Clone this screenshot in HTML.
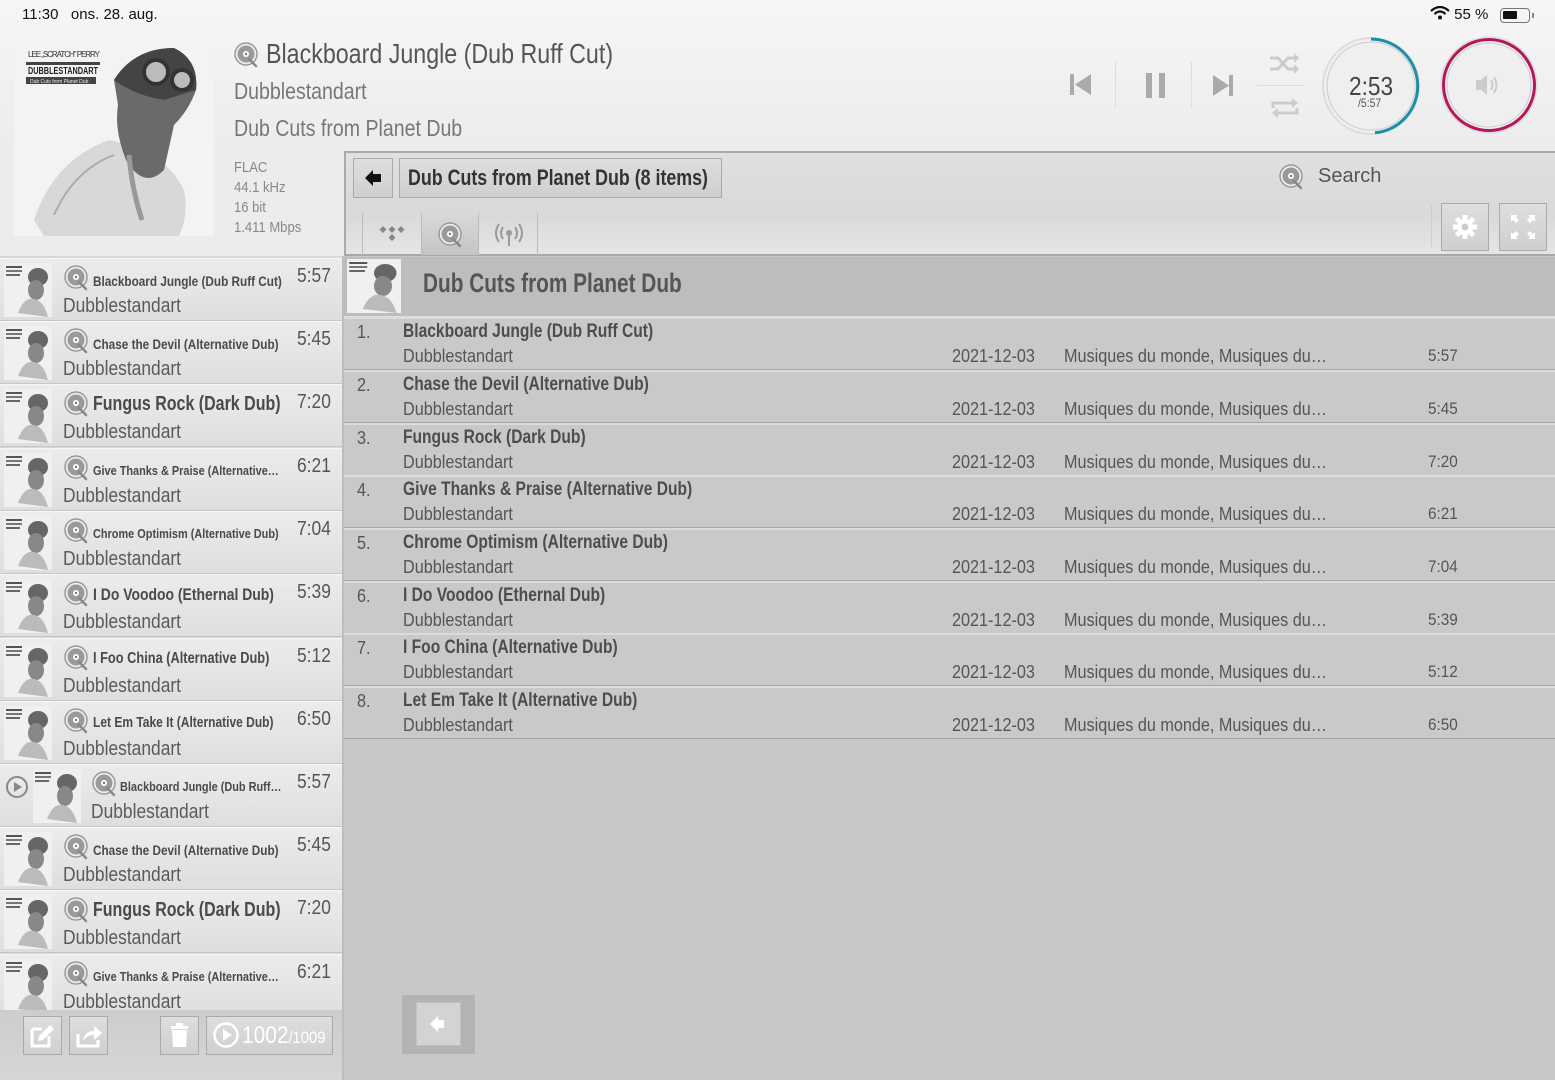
<!DOCTYPE html>
<html><head><meta charset="utf-8">
<style>
*{margin:0;padding:0;box-sizing:border-box}
body{width:1555px;height:1080px;overflow:hidden;background:#c8c8c8;font-family:"Liberation Sans Narrow","Liberation Sans",sans-serif;color:#555;position:relative}
.a{position:absolute;white-space:nowrap}
.n8{transform:scaleX(.87);transform-origin:0 0}
.b8{transform:scaleX(.81);transform-origin:0 0}
.top{left:0;top:0;width:1555px;height:152px;background:linear-gradient(#f6f6f6,#ececec)}
.lefthead{left:0;top:152px;width:344px;height:104px;background:#ececec}
.q{position:absolute;left:0;width:343px;height:63px;background:linear-gradient(#ececec,#dedede);border-top:1px solid #f8f8f8;border-bottom:1px solid #c6c6c6}
.q .th{position:absolute;left:4px;top:4px;width:48px;height:54px}
.q .ic{position:absolute;left:64px;top:6px;width:26px;height:26px}
.q .t{position:absolute;left:93px;top:11px;font-weight:bold;font-size:14px;color:#4a4a4a;white-space:nowrap;transform:scaleX(.84);transform-origin:0 0}
.q .d{position:absolute;left:297px;top:6px;font-size:20px;color:#555;transform:scaleX(.87);transform-origin:0 0}
.q .ar{position:absolute;left:63px;top:36px;font-size:20px;color:#5a5a5a;white-space:nowrap;transform:scaleX(.87);transform-origin:0 0}
.r{position:absolute;left:344px;width:1211px;height:53px;background:#c9c9c9;border-top:2px solid #dcdcdc;border-bottom:1px solid #a4a4a4}
.r div{white-space:nowrap;transform:scaleX(.9);transform-origin:0 0}
.r .n{position:absolute;left:13px;top:3px;font-size:18px;color:#555}
.r .t{position:absolute;left:59px;top:2px;font-size:19px;font-weight:bold;color:#4d4d4d;transform:scaleX(.82)}
.r .ar{position:absolute;left:59px;top:27px;font-size:18px;color:#555}
.r .dt{position:absolute;left:608px;top:27px;font-size:18px;color:#555}
.r .g{position:absolute;left:720px;top:27px;font-size:18px;color:#555}
.r .du{position:absolute;left:1084px;top:27px;font-size:17px;color:#555}
.btn{position:absolute;background:linear-gradient(#dedede,#cfcfcf);border:1px solid #aaa}
</style></head><body>
<svg width="0" height="0" style="position:absolute">
<defs>
<symbol id="disc" viewBox="0 0 26 26">
<circle cx="12" cy="12" r="11" fill="#eee" stroke="#999" stroke-width="1.5"/>
<circle cx="12" cy="12" r="8.5" fill="#9a9a9a"/>
<circle cx="12" cy="12" r="3" fill="#fff"/>
<circle cx="12" cy="12" r="1.2" fill="#777"/>
<path d="M15 17 L22 24" stroke="#888" stroke-width="2.5" stroke-linecap="round"/>
</symbol>
<symbol id="thumb" viewBox="0 0 48 54">
<rect width="48" height="54" fill="#f0f0f0"/>
<rect x="2" y="3" width="16" height="2" fill="#555"/><rect x="2" y="7" width="16" height="2" fill="#777"/><rect x="2" y="11" width="14" height="2" fill="#666"/>
<ellipse cx="34" cy="14" rx="10" ry="9" fill="#666"/>
<ellipse cx="32" cy="27" rx="8" ry="10" fill="#888"/>
<path d="M14 50 Q20 34 30 36 Q40 38 44 54 Z" fill="#bbb"/>
</symbol>
</defs></svg>

<div class="a top"></div>
<div class="a lefthead"></div>
<div class="a" style="left:22px;top:6px;font-family:'Liberation Sans',sans-serif;font-size:15px;color:#111">11:30&nbsp;&nbsp; ons. 28. aug.</div>
<div class="a" style="left:1430px;top:6px;font-family:'Liberation Sans',sans-serif;font-size:15px;color:#111">
<svg width="20" height="14" viewBox="0 0 20 14" style="vertical-align:-1px"><path d="M1 5 Q10 -3 19 5" stroke="#111" stroke-width="2.2" fill="none"/><path d="M4.5 8 Q10 3 15.5 8" stroke="#111" stroke-width="2.2" fill="none"/><circle cx="10" cy="11.5" r="2" fill="#111"/></svg> 55 %</div>
<div class="a" style="left:1500px;top:8px;width:30px;height:15px;border:1.5px solid #777;border-radius:4px"><div style="position:absolute;left:2px;top:2px;width:14px;height:8px;background:#111;border-radius:1px"></div></div>
<div class="a" style="left:1532px;top:13px;width:2px;height:5px;background:#888"></div>

<div class="a" style="left:14px;top:40px;width:200px;height:196px">
<svg width="200" height="196" viewBox="0 0 200 196">
<rect width="200" height="196" fill="#f3f3f3"/>
<text x="14" y="17" font-size="8" fill="#333" font-family="Liberation Sans,sans-serif" textLength="72">LEE „SCRATCH" PERRY</text>
<rect x="12" y="22" width="74" height="3" fill="#444"/>
<text x="14" y="34" font-size="10" font-weight="bold" fill="#222" font-family="Liberation Sans,sans-serif" textLength="70" lengthAdjust="spacingAndGlyphs">DUBBLESTANDART</text>
<rect x="12" y="37" width="70" height="7" fill="#444"/>
<text x="16" y="43" font-size="5" fill="#eee">Dub Cuts from Planet Dub</text>
<path d="M20 180 Q40 120 95 100 Q150 110 170 150 Q175 175 165 196 L30 196 Z" fill="#d8d8d8"/>
<path d="M40 175 Q60 130 100 115" stroke="#aaa" stroke-width="2" fill="none"/>
<path d="M100 40 Q120 8 160 8 Q185 20 182 50 Q175 70 160 85 L150 130 Q130 150 112 120 Q100 90 104 65 Z" fill="#6a6a6a"/>
<path d="M100 40 Q120 8 160 8 Q185 20 182 50 L150 60 Q120 55 100 40Z" fill="#444"/>
<circle cx="142" cy="32" r="12" fill="#bbb" stroke="#333" stroke-width="4"/><circle cx="168" cy="40" r="10" fill="#bbb" stroke="#333" stroke-width="4"/>
<path d="M115 115 Q118 150 128 180" stroke="#999" stroke-width="5" fill="none"/>
</svg></div>

<div class="a" style="left:234px;top:42px;width:26px;height:26px"><svg width="26" height="26"><use href="#disc"/></svg></div>
<div class="a n8" style="left:266px;top:38px;font-size:28px;color:#555;transform:scaleX(.83)">Blackboard Jungle (Dub Ruff Cut)</div>
<div class="a n8" style="left:234px;top:78px;font-size:23px;color:#777;transform:scaleX(.85)">Dubblestandart</div>
<div class="a n8" style="left:234px;top:115px;font-size:23px;color:#777;transform:scaleX(.85)">Dub Cuts from Planet Dub</div>
<div class="a n8" style="left:234px;top:158px;font-size:15px;color:#888;line-height:20px;white-space:normal">FLAC<br>44.1 kHz<br>16 bit<br>1.411 Mbps</div>

<svg class="a" style="left:1068px;top:72px" width="24" height="26"><rect x="2" y="2" width="4" height="21" fill="#aaa"/><path d="M23 2 L7 12.5 L23 23 Z" fill="#aaa"/></svg>
<div class="a" style="left:1115px;top:62px;width:1px;height:47px;background:#fff;border-left:1px solid #ddd"></div>
<svg class="a" style="left:1145px;top:73px" width="22" height="25"><rect x="1" y="0" width="6" height="25" fill="#aaa"/><rect x="14" y="0" width="6" height="25" fill="#aaa"/></svg>
<div class="a" style="left:1191px;top:62px;width:1px;height:47px;background:#fff;border-left:1px solid #ddd"></div>
<svg class="a" style="left:1213px;top:74px" width="22" height="24"><path d="M0 1 L16 11.5 L0 22 Z" fill="#aaa"/><rect x="16" y="1" width="4" height="21" fill="#aaa"/></svg>
<svg class="a" style="left:1268px;top:50px" width="34" height="26"><path d="M2 8 H10 L20 19 H28 M2 19 H10 L20 8 H28" stroke="#ccc" stroke-width="3" fill="none"/><path d="M26 3 L31 8 L26 13 Z M26 14 L31 19 L26 24 Z" fill="#ccc"/></svg>
<div class="a" style="left:1257px;top:85px;width:48px;height:1px;background:#ddd"></div>
<svg class="a" style="left:1268px;top:94px" width="34" height="28"><path d="M5 14 V9 H26 M29 14 V19 H8" stroke="#ccc" stroke-width="3" fill="none"/><path d="M24 4 L30 9 L24 14 Z M10 14 L4 19 L10 24 Z" fill="#ccc"/></svg>
<svg class="a" style="left:1320px;top:35px" width="102" height="102"><circle cx="51" cy="51" r="48" fill="#efefef" stroke="#ddd" stroke-width="2"/><circle cx="51" cy="51" r="44" fill="none" stroke="#ccc" stroke-width="1"/><path d="M51 4 A47 47 0 0 1 55 97.8" stroke="#1a8fa8" stroke-width="3" fill="none"/></svg>
<div class="a n8" style="left:1349px;top:71px;font-size:26px;color:#444">2:53</div>
<div class="a n8" style="left:1358px;top:96px;font-size:12px;color:#555">/5:57</div>
<svg class="a" style="left:1439px;top:35px" width="100" height="100"><circle cx="50" cy="50" r="48" fill="#efefef" stroke="#ddd" stroke-width="1.5"/><circle cx="50" cy="50" r="45.5" fill="none" stroke="#b5185a" stroke-width="3"/><circle cx="50" cy="50" r="42" fill="none" stroke="#ccc" stroke-width="1"/><path d="M37 45 H42 L48 40 V60 L42 55 H37 Z" fill="#ccc"/><path d="M52 45 Q55 50 52 55 M55 42 Q60 50 55 58" stroke="#ccc" stroke-width="2" fill="none"/></svg>

<div class="a" style="left:344px;top:151px;width:1211px;height:105px;background:linear-gradient(#e0e0e0,#d9d9d9 60%,#e5e5e5);border-top:2px solid #aaa;border-left:2px solid #aaa;border-bottom:2px solid #a8a8a8"></div>
<div class="btn" style="left:353px;top:158px;width:40px;height:40px"><svg width="38" height="38"><path d="M11 19 L19 11 V15 H27 V23 H19 V27 Z" fill="#111"/></svg></div>
<div class="btn" style="left:399px;top:158px;width:323px;height:40px"></div>
<div class="a b8" style="left:408px;top:165px;font-size:22px;font-weight:bold;color:#333">Dub Cuts from Planet Dub (8 items)</div>
<svg class="a" style="left:1279px;top:164px" width="26" height="26"><use href="#disc"/></svg>
<div class="a" style="left:1318px;top:165px;font-family:'Liberation Sans',sans-serif;font-size:20px;color:#555">Search</div>
<div class="a" style="left:362px;top:213px;width:1px;height:42px;background:#bbb"></div>
<div class="a" style="left:421px;top:213px;width:58px;height:42px;background:linear-gradient(#d9d9d9,#c4c4c4);border-left:1px solid #bbb;border-right:1px solid #bbb"></div>
<div class="a" style="left:537px;top:213px;width:1px;height:42px;background:#bbb"></div>
<svg class="a" style="left:379px;top:225px" width="28" height="18"><path d="M4 1 L7.5 4.5 L4 8 L0.5 4.5Z M13 1 L16.5 4.5 L13 8 L9.5 4.5Z M22 1 L25.5 4.5 L22 8 L18.5 4.5Z M13 9 L16.5 12.5 L13 16 L9.5 12.5Z" fill="#888"/></svg>
<svg class="a" style="left:438px;top:222px" width="26" height="26"><use href="#disc"/></svg>
<svg class="a" style="left:494px;top:221px" width="30" height="28"><circle cx="15" cy="12" r="3" fill="#999"/><rect x="14" y="13" width="2" height="12" fill="#999"/><path d="M9 6 Q5 12 9 18 M21 6 Q25 12 21 18 M5 3 Q-1 12 5 21 M25 3 Q31 12 25 21" stroke="#999" stroke-width="2" fill="none"/></svg>
<div class="a" style="left:1431px;top:205px;width:1px;height:42px;background:#fff;border-left:1px solid #ccc"></div>
<div class="btn" style="left:1441px;top:203px;width:48px;height:48px"><svg width="46" height="46"><g transform="translate(23 23)" fill="#fff"><circle r="8"/><rect x="-2.5" y="-12" width="5" height="24"/><rect x="-12" y="-2.5" width="24" height="5"/><g transform="rotate(45)"><rect x="-2.5" y="-12" width="5" height="24"/><rect x="-12" y="-2.5" width="24" height="5"/></g><circle r="3.5" fill="#ccc"/></g></svg></div>
<div class="btn" style="left:1499px;top:203px;width:48px;height:48px"><svg width="46" height="46" fill="#fff"><path d="M11 11 H18 L16 13 L19 16 L16 19 L13 16 L11 18Z M35 11 V18 L33 16 L30 19 L27 16 L30 13 L28 11Z M11 35 V28 L13 30 L16 27 L19 30 L16 33 L18 35Z M35 35 H28 L30 33 L27 30 L30 27 L33 30 L35 28Z"/></svg></div>

<div class="a" style="left:344px;top:257px;width:1211px;height:61px;background:#bdbdbd;border-bottom:2px solid #dedede"></div>
<svg class="a" style="left:347px;top:259px" width="54" height="54" viewBox="0 0 48 54" preserveAspectRatio="none"><use href="#thumb"/></svg>
<div class="a" style="left:423px;top:268px;font-size:27px;font-weight:bold;color:#555;transform:scaleX(.77);transform-origin:0 0">Dub Cuts from Planet Dub</div>

<div class="r" style="top:317px"><div class="n">1.</div><div class="t">Blackboard Jungle (Dub Ruff Cut)</div><div class="ar">Dubblestandart</div><div class="dt">2021-12-03</div><div class="g">Musiques du monde, Musiques du…</div><div class="du">5:57</div></div>
<div class="r" style="top:370px"><div class="n">2.</div><div class="t">Chase the Devil (Alternative Dub)</div><div class="ar">Dubblestandart</div><div class="dt">2021-12-03</div><div class="g">Musiques du monde, Musiques du…</div><div class="du">5:45</div></div>
<div class="r" style="top:423px"><div class="n">3.</div><div class="t">Fungus Rock (Dark Dub)</div><div class="ar">Dubblestandart</div><div class="dt">2021-12-03</div><div class="g">Musiques du monde, Musiques du…</div><div class="du">7:20</div></div>
<div class="r" style="top:475px"><div class="n">4.</div><div class="t">Give Thanks &amp; Praise (Alternative Dub)</div><div class="ar">Dubblestandart</div><div class="dt">2021-12-03</div><div class="g">Musiques du monde, Musiques du…</div><div class="du">6:21</div></div>
<div class="r" style="top:528px"><div class="n">5.</div><div class="t">Chrome Optimism (Alternative Dub)</div><div class="ar">Dubblestandart</div><div class="dt">2021-12-03</div><div class="g">Musiques du monde, Musiques du…</div><div class="du">7:04</div></div>
<div class="r" style="top:581px"><div class="n">6.</div><div class="t">I Do Voodoo (Ethernal Dub)</div><div class="ar">Dubblestandart</div><div class="dt">2021-12-03</div><div class="g">Musiques du monde, Musiques du…</div><div class="du">5:39</div></div>
<div class="r" style="top:633px"><div class="n">7.</div><div class="t">I Foo China (Alternative Dub)</div><div class="ar">Dubblestandart</div><div class="dt">2021-12-03</div><div class="g">Musiques du monde, Musiques du…</div><div class="du">5:12</div></div>
<div class="r" style="top:686px"><div class="n">8.</div><div class="t">Let Em Take It (Alternative Dub)</div><div class="ar">Dubblestandart</div><div class="dt">2021-12-03</div><div class="g">Musiques du monde, Musiques du…</div><div class="du">6:50</div></div>

<div class="a" style="left:402px;top:995px;width:73px;height:59px;background:#b3b3b3"></div>
<div class="a" style="left:416px;top:1002px;width:45px;height:44px;background:#d3d3d3;border:1px solid #c0c0c0"><svg width="44" height="44"><path d="M13 21 L21 13 V17 H27 V25 H21 V29 Z" fill="#fff"/></svg></div>

<div class="a" style="left:0;top:256px;width:344px;height:824px;background:#d8d8d8;border-right:2px solid #bdbdbd"></div>
<div class="a" style="left:0;top:256px;width:342px;height:754px;overflow:hidden">
<div class="q" style="top:2px"><svg class="th"><use href="#thumb"/></svg><svg class="ic"><use href="#disc"/></svg><div class="t" style="top:14px">Blackboard Jungle (Dub Ruff Cut)</div><div class="d">5:57</div><div class="ar">Dubblestandart</div></div>
<div class="q" style="top:65px"><svg class="th"><use href="#thumb"/></svg><svg class="ic"><use href="#disc"/></svg><div class="t" style="top:14px">Chase the Devil (Alternative Dub)</div><div class="d">5:45</div><div class="ar">Dubblestandart</div></div>
<div class="q" style="top:128px"><svg class="th"><use href="#thumb"/></svg><svg class="ic"><use href="#disc"/></svg><div class="t" style="top:8px;font-size:20px;transform:scaleX(.8)">Fungus Rock (Dark Dub)</div><div class="d">7:20</div><div class="ar">Dubblestandart</div></div>
<div class="q" style="top:192px"><svg class="th"><use href="#thumb"/></svg><svg class="ic"><use href="#disc"/></svg><div class="t" style="top:14px;font-size:13px">Give Thanks &amp; Praise (Alternative…</div><div class="d">6:21</div><div class="ar">Dubblestandart</div></div>
<div class="q" style="top:255px"><svg class="th"><use href="#thumb"/></svg><svg class="ic"><use href="#disc"/></svg><div class="t" style="top:14px;font-size:13px">Chrome Optimism (Alternative Dub)</div><div class="d">7:04</div><div class="ar">Dubblestandart</div></div>
<div class="q" style="top:318px"><svg class="th"><use href="#thumb"/></svg><svg class="ic"><use href="#disc"/></svg><div class="t" style="top:10px;font-size:17px;transform:scaleX(.82)">I Do Voodoo (Ethernal Dub)</div><div class="d">5:39</div><div class="ar">Dubblestandart</div></div>
<div class="q" style="top:382px"><svg class="th"><use href="#thumb"/></svg><svg class="ic"><use href="#disc"/></svg><div class="t" style="top:11px;font-size:16px;transform:scaleX(.8)">I Foo China (Alternative Dub)</div><div class="d">5:12</div><div class="ar">Dubblestandart</div></div>
<div class="q" style="top:445px"><svg class="th"><use href="#thumb"/></svg><svg class="ic"><use href="#disc"/></svg><div class="t" style="top:12px;font-size:15px;transform:scaleX(.8)">Let Em Take It (Alternative Dub)</div><div class="d">6:50</div><div class="ar">Dubblestandart</div></div>
<div class="q" style="top:508px"><svg class="a" style="left:5px;top:10px" width="24" height="24"><circle cx="12" cy="12" r="10" fill="none" stroke="#888" stroke-width="2"/><path d="M9 7 L17 12 L9 17Z" fill="#888"/></svg><svg class="th" style="left:33px"><use href="#thumb"/></svg><svg class="ic" style="left:92px"><use href="#disc"/></svg><div class="t" style="left:120px;top:14px;font-size:13px">Blackboard Jungle (Dub Ruff…</div><div class="d">5:57</div><div class="ar" style="left:91px">Dubblestandart</div></div>
<div class="q" style="top:571px"><svg class="th"><use href="#thumb"/></svg><svg class="ic"><use href="#disc"/></svg><div class="t" style="top:14px">Chase the Devil (Alternative Dub)</div><div class="d">5:45</div><div class="ar">Dubblestandart</div></div>
<div class="q" style="top:634px"><svg class="th"><use href="#thumb"/></svg><svg class="ic"><use href="#disc"/></svg><div class="t" style="top:8px;font-size:20px;transform:scaleX(.8)">Fungus Rock (Dark Dub)</div><div class="d">7:20</div><div class="ar">Dubblestandart</div></div>
<div class="q" style="top:698px"><svg class="th"><use href="#thumb"/></svg><svg class="ic"><use href="#disc"/></svg><div class="t" style="top:14px;font-size:13px">Give Thanks &amp; Praise (Alternative…</div><div class="d">6:21</div><div class="ar">Dubblestandart</div></div>
</div>
<div class="a" style="left:0;top:1010px;width:342px;height:70px;background:linear-gradient(#cdcdcd,#d6d6d6)"></div>
<div class="btn" style="left:23px;top:1016px;width:39px;height:39px"><svg width="37" height="37"><path d="M8 12 H18 M8 12 V29 H25 V19" stroke="#fff" stroke-width="3" fill="none"/><path d="M14 24 L15 19 L26 8 L30 12 L19 23 Z" fill="#fff"/></svg></div>
<div class="btn" style="left:69px;top:1016px;width:39px;height:39px"><svg width="37" height="37"><path d="M8 17 V29 H28 V23" stroke="#fff" stroke-width="3" fill="none"/><path d="M13 24 Q14 14 24 14 V9 L32 16 L24 23 V18 Q17 18 13 24Z" fill="#fff"/></svg></div>
<div class="btn" style="left:160px;top:1016px;width:39px;height:39px"><svg width="37" height="37"><rect x="10" y="9" width="17" height="3" fill="#fff"/><rect x="15" y="6" width="7" height="3" fill="#fff"/><path d="M11 13 H26 L25 30 H12 Z" fill="#fff"/></svg></div>
<div class="btn" style="left:206px;top:1016px;width:127px;height:39px"></div>
<svg class="a" style="left:212px;top:1021px" width="28" height="28"><circle cx="14" cy="14" r="11.5" fill="none" stroke="#fff" stroke-width="2.5"/><path d="M11 8 L20 14 L11 20Z" fill="#fff"/></svg>
<div class="a n8" style="left:242px;top:1022px;font-size:24px;color:#fff">1002<span style="font-size:17px">/1009</span></div>
</body></html>
